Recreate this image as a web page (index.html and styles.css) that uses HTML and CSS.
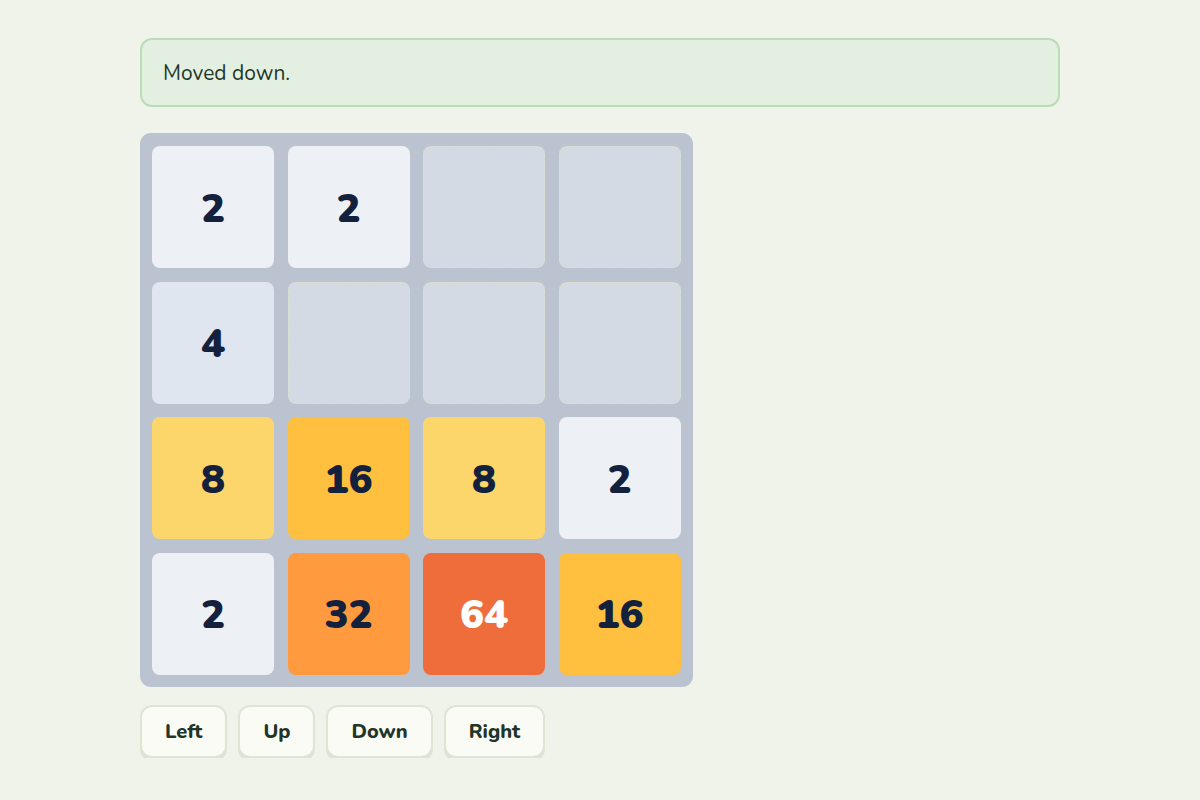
FILE: index.html
```html
<!DOCTYPE html>
<html>
<head>
    <title>2048</title>
    <link rel="stylesheet" href="styles.css">
</head>
<body>
    <div class="page">
        <!-- Status message -->
        <div class="status">Moved down.</div>

        <!-- Board -->
        <div class="board">
            <div class="tile t2">2</div>
            <div class="tile t2">2</div>
            <div class="tile empty"></div>
            <div class="tile empty"></div>

            <div class="tile t4">4</div>
            <div class="tile empty"></div>
            <div class="tile empty"></div>
            <div class="tile empty"></div>

            <div class="tile t8">8</div>
            <div class="tile t16">16</div>
            <div class="tile t8">8</div>
            <div class="tile t2">2</div>

            <div class="tile t2">2</div>
            <div class="tile t32">32</div>
            <div class="tile t64">64</div>
            <div class="tile t16">16</div>
        </div>

        <!-- Controls -->
        <div class="controls">
            <button class="move-btn">Left</button>
            <button class="move-btn">Up</button>
            <button class="move-btn">Down</button>
            <button class="move-btn">Right</button>
        </div>
    </div>
</body>
</html>
```

FILE: styles.css
```css
/* Page */
body {
    margin: 0;
    background-color: #f0f3ea;
    font-family: "Nunito", "Lato", "Noto Sans", sans-serif;
    color: #1d2d22;
}

.page {
    width: 920px;
    margin: 0 auto;
    padding-top: 38px;
}

/* Status message */
.status {
    background-color: #e3f0e1;
    border: 2px solid #b9dcb9;
    border-radius: 12px;
    padding: 0 21px;
    height: 65px;
    display: flex;
    align-items: center;
    font-size: 21px;
    color: #24372a;
}

/* Board */
.board {
    margin-top: 26px;
    width: 529px;
    padding: 13px 12px 12px;
    background-color: #bac3cf;
    border-radius: 11px;
    display: grid;
    grid-template-columns: repeat(4, 122px);
    grid-auto-rows: 122px;
    gap: 13.5px;
}

.tile {
    border-radius: 8px;
    display: flex;
    align-items: center;
    justify-content: center;
    padding-top: 3px;
    box-sizing: border-box;
    font-size: 40px;
    font-weight: 900;
    color: #14213d;
}

.empty {
    background-color: #d4dae3;
    border: 1.5px dashed #d9e2c8;
}

.t2 { background-color: #edf1f5; }
.t4 { background-color: #dfe6ef; }
.t8 { background-color: #fdd66b; }
.t16 { background-color: #ffc040; }
.t32 { background-color: #ff9a3e; }
.t64 { background-color: #ef6d3a; color: #ffffff; }

/* Controls */
.controls {
    display: flex;
    gap: 11px;
    margin-top: 18px;
}

.move-btn {
    font-family: inherit;
    font-size: 20px;
    font-weight: 800;
    color: #1f3527;
    background-color: #fbfbf6;
    border: 2px solid #dde6d5;
    border-radius: 12px;
    box-shadow: 0 3px 0 #dbe3d2;
    height: 53px;
    padding: 0 23px;
    cursor: pointer;
}
```
